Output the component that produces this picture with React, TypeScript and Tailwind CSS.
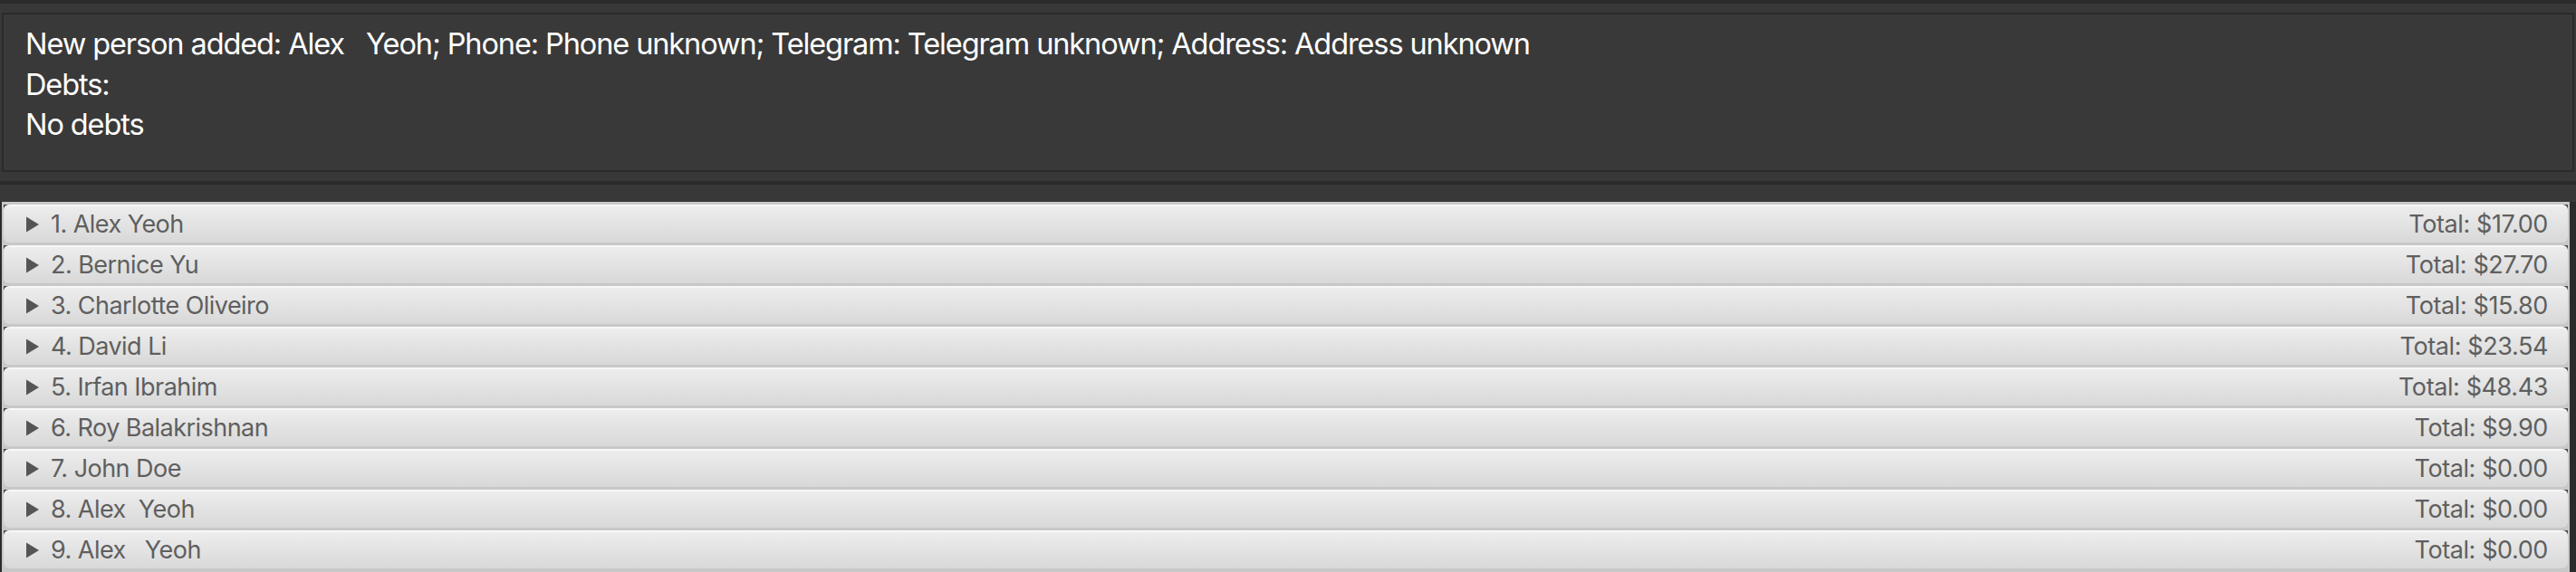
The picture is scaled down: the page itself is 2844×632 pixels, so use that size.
import React from 'react';

interface Person {
  name: string;
  total: string;
}

const people: Person[] = [
  { name: '1. Alex Yeoh', total: '$17.00' },
  { name: '2. Bernice Yu', total: '$27.70' },
  { name: '3. Charlotte Oliveiro', total: '$15.80' },
  { name: '4. David Li', total: '$23.54' },
  { name: '5. Irfan Ibrahim', total: '$48.43' },
  { name: '6. Roy Balakrishnan', total: '$9.90' },
  { name: '7. John Doe', total: '$0.00' },
  { name: '8. Alex  Yeoh', total: '$0.00' },
  { name: '9. Alex   Yeoh', total: '$0.00' },
];

const PersonRow: React.FC<{ person: Person }> = ({ person }) => {
  return (
    <div className="h-[42px] shrink-0 bg-[linear-gradient(to_bottom,#4a4a4a_0,#4a4a4a_5px,#c8c8c8_5px)]">
      <div className="flex h-full items-center justify-between rounded-[6px] border-t-2 border-[#f7f7f7] bg-[linear-gradient(to_bottom,#ededed,#d8d8d8)] pl-[24px] pr-[22px] text-[27px] text-[#5f5f5f]">
        <div className="flex items-center">
          <svg width="16" height="18" viewBox="0 0 16 18" className="mr-[12px]">
            <polygon points="1,0.5 15,9 1,17.5" fill="#555555" />
          </svg>
          <span className="whitespace-pre tracking-[-0.02em]">{person.name}</span>
        </div>
        <span className="whitespace-pre tracking-[-0.015em]">Total: {person.total}</span>
      </div>
    </div>
  );
};

const App: React.FC = () => {
  return (
    <div className="h-[632px] w-[2844px] overflow-hidden bg-[#383838] font-['Inter','Roboto',sans-serif]">
      <div className="h-[4px] bg-[#2a2a2a]" />
      <div className="px-[2px] pt-[10px]">
        <div className="h-[176px] border-2 border-[#2b2b2b] bg-[#393939] pl-[24px] pt-[11px] text-[32.5px] leading-[44.5px] text-white">
          <p className="whitespace-pre tracking-[-0.034em]">
            New person added: Alex   Yeoh; Phone: Phone unknown; Telegram: Telegram unknown; Address: Address unknown
          </p>
          <p className="tracking-[-0.034em]">Debts:</p>
          <p className="tracking-[-0.034em]">No debts</p>
        </div>
      </div>
      <div className="mt-[10px] h-[4px] bg-[#2b2b2b]" />
      <div className="flex h-[409px] mt-[19px]">
        <div className="w-[2px] bg-[#2b2b2b]" />
        <div className="flex w-[2835px] flex-col gap-[3px] bg-[#c8c8c8] pl-[2px] pr-[2px] pt-[3px]">
          {people.map((p) => (
            <PersonRow key={p.name} person={p} />
          ))}
        </div>
        <div className="flex-1 bg-[#2b2b2b]" />
      </div>
    </div>
  );
};

export default App;
